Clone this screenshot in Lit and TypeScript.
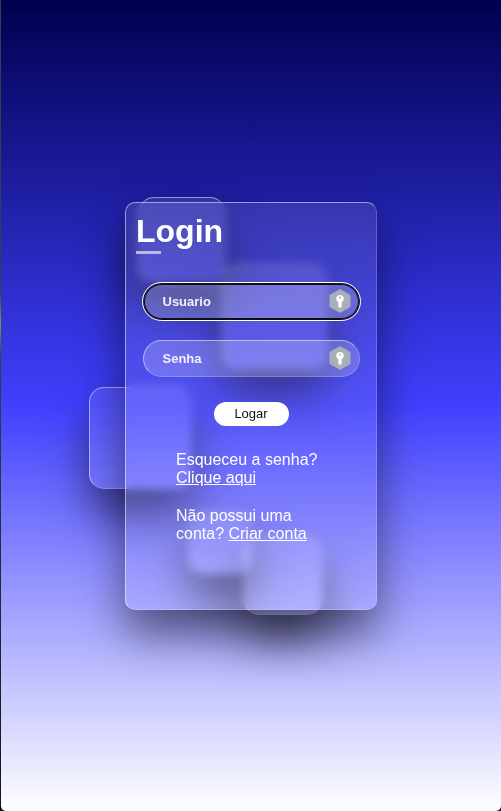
import { LitElement, html, css, svg } from "lit";
import { customElement } from "lit/decorators.js";

const keyIcon = html`<svg class="key" viewBox="0 0 22 24" aria-hidden="true">
  ${svg`<path d="M11 0 21.5 6v12L11 24 .5 18V6z" fill="#a9afb9" />
  <path d="M11 6a3.700 3.700 0 0 0-1.700 7V17a1.700 1.700 0 0 0 3.400 0v-4A3.700 3.700 0 0 0 11 6z" fill="#fff" />
  <path d="M10 8.500h2M11 7.500v2" stroke="#a9afb9" stroke-width="1" />`}
</svg>`;

@customElement("app-root")
export class AppRoot extends LitElement {
  static styles = css`
    :host {
      display: block;
      background: #10151c;
      font-family: "Liberation Sans", Arial, sans-serif;
    }
    *, *::before, *::after {
      box-sizing: border-box;
    }
    .frame {
      padding-left: 1px;
      background: linear-gradient(#33404c 36%, #8a9a30 40%, #33404c 44%, #10151c);
    }
    .page {
      min-height: 100vh;
      display: flex;
      align-items: center;
      justify-content: center;
      overflow: hidden;
      border-radius: 0 0 5px 5px;
      background: linear-gradient(#000050, #4040ff, #ffffff);
    }
    .box {
      position: relative;
    }
    .square {
      position: absolute;
      border: 1px solid rgba(255, 255, 255, 0.5);
      border-right-color: rgba(255, 255, 255, 0.2);
      border-bottom-color: rgba(255, 255, 255, 0.2);
      border-radius: 15px;
      background: rgba(255, 255, 255, 0.1);
      box-shadow: 0 25px 45px rgba(0, 0, 0, 0.5);
    }
    .s1 { left: 14px; top: -5px; width: 86px; height: 86px; }
    .s2 { left: 98px; top: 63px; width: 104px; height: 104px; }
    .s3 { left: -36px; top: 185px; width: 102px; height: 102px; }
    .s4 { left: 64px; top: 310px; width: 62px; height: 62px; }
    .s5 { left: 119px; top: 335px; width: 78px; height: 78px; }
    .card {
      position: relative;
      width: 252px;
      padding: 8px 10px 66px;
      border: 1px solid rgba(255, 255, 255, 0.5);
      border-right-color: rgba(255, 255, 255, 0.2);
      border-bottom-color: rgba(255, 255, 255, 0.2);
      border-radius: 10px;
      background: rgba(255, 255, 255, 0.1);
      box-shadow: 0 25px 45px rgba(0, 0, 0, 0.5);
      backdrop-filter: blur(5px);
      color: #fff;
    }
    h1 {
      margin: 0 0 29px;
      font-size: 32px;
      line-height: 40px;
    }
    h1::after {
      content: "";
      display: block;
      width: 25px;
      height: 3px;
      background: rgba(255, 255, 255, 0.6);
    }
    form {
      display: flex;
      flex-direction: column;
      align-items: center;
      gap: 20px;
    }
    .field {
      display: flex;
      align-items: center;
      width: 217px;
      height: 37px;
      padding: 0 8px 0 19px;
      border: 1px solid rgba(255, 255, 255, 0.5);
      border-right-color: rgba(255, 255, 255, 0.2);
      border-bottom-color: rgba(255, 255, 255, 0.2);
      border-radius: 19px;
      background: rgba(255, 255, 255, 0.2);
    }
    .field.active {
      border-color: #101010;
      outline: 1px solid #fff;
      box-shadow: inset 0 0 0 1px #101010;
    }
    input {
      flex: 1;
      min-width: 0;
      padding: 0;
      border: 0;
      outline: 0;
      background: none;
      color: #fff;
      font: 700 13px "Liberation Sans", Arial, sans-serif;
    }
    input::placeholder {
      color: rgba(255, 255, 255, 0.9);
      opacity: 1;
    }
    .key {
      width: 22px;
      height: 24px;
    }
    button {
      width: 75px;
      height: 24px;
      margin-top: 5px;
      padding: 0;
      border: 0;
      border-radius: 12px;
      background: #fff;
      color: #101010;
      font: 400 13px "Liberation Sans", Arial, sans-serif;
    }
    .links {
      display: grid;
      gap: 20px;
      margin: 25px 40px 0;
      font-size: 16px;
      line-height: 18px;
    }
    p {
      margin: 0;
    }
    a {
      color: #fff;
    }
  `;

  render() {
    return html`
      <div class="frame">
        <main class="page">
          <div class="box">
            <div class="square s1"></div>
            <div class="square s2"></div>
            <div class="square s3"></div>
            <div class="square s4"></div>
            <div class="square s5"></div>
            <section class="card">
              <h1>Login</h1>
              <form @submit=${(e: Event) => e.preventDefault()}>
                <label class="field active">
                  <input type="text" placeholder="Usuario" aria-label="Usuario" />${keyIcon}
                </label>
                <label class="field">
                  <input type="password" placeholder="Senha" aria-label="Senha" />${keyIcon}
                </label>
                <button type="submit">Logar</button>
              </form>
              <div class="links">
                <p>Esqueceu a senha? <a href="#">Clique aqui</a></p>
                <p>Não possui uma conta? <a href="#">Criar conta</a></p>
              </div>
            </section>
          </div>
        </main>
      </div>
    `;
  }
}
